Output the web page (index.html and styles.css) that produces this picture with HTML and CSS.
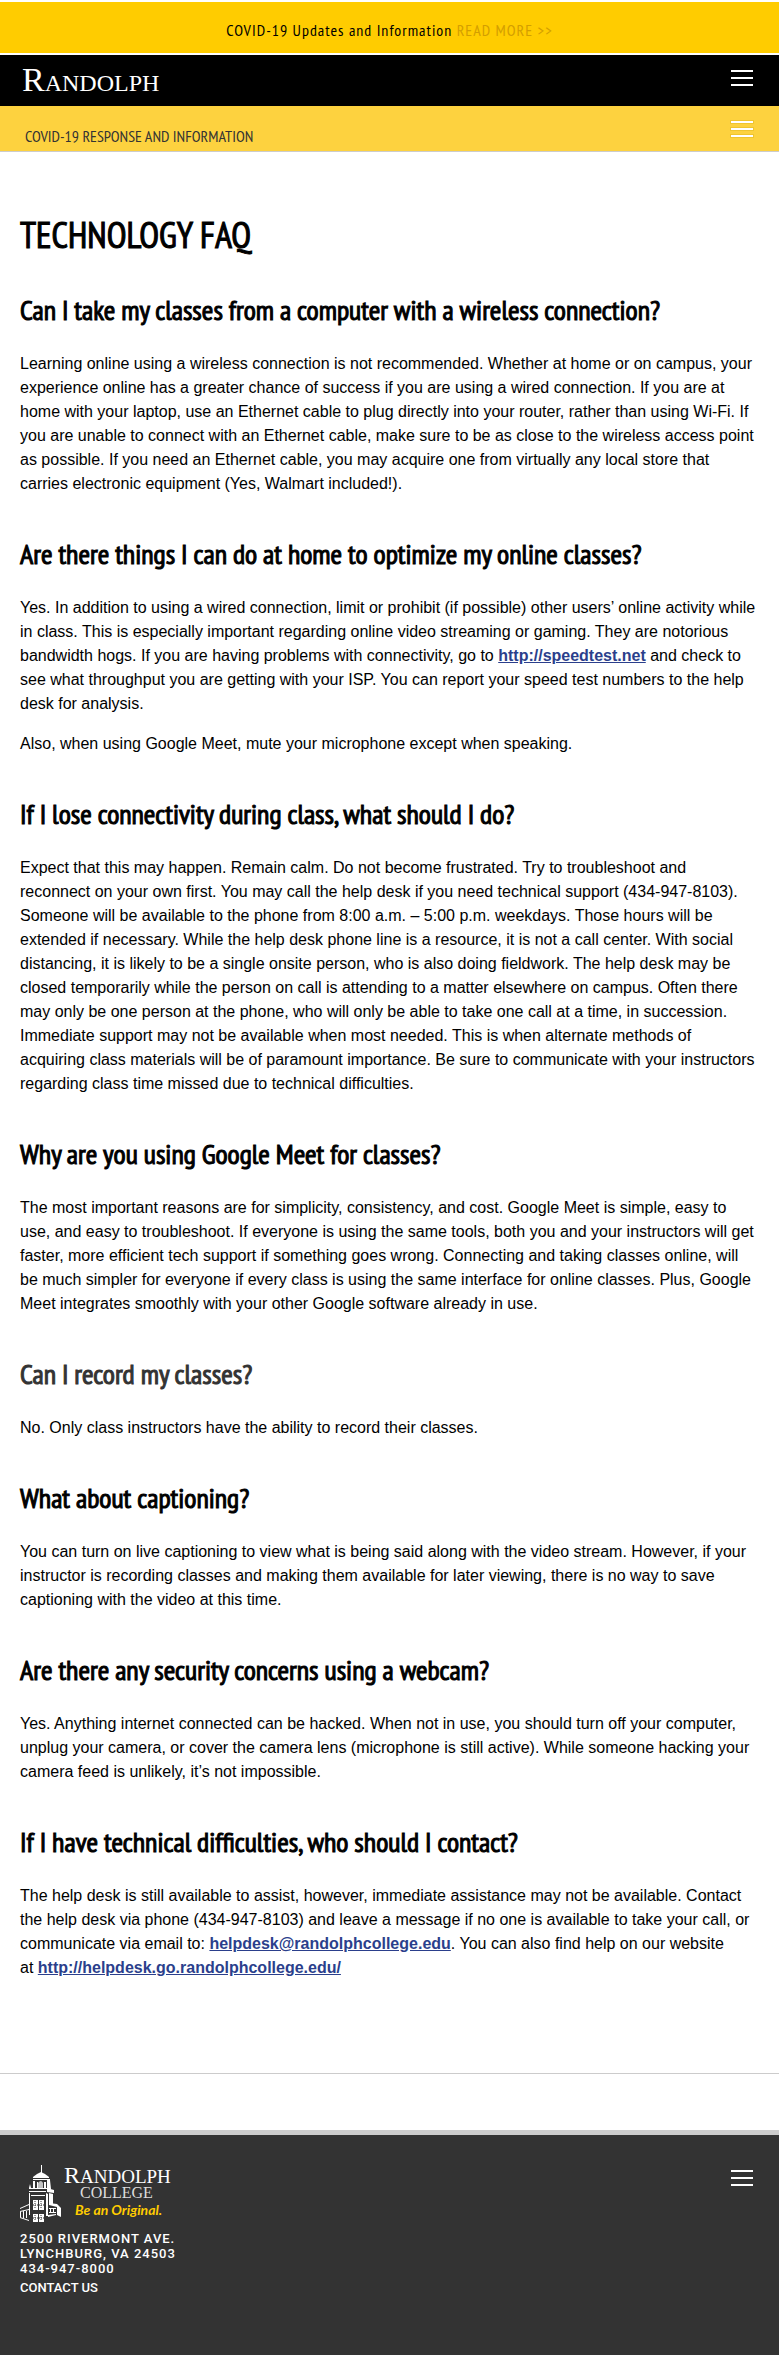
FILE: index.html
```html
<!DOCTYPE html>
<html lang="en">
<head>
<meta charset="utf-8">
<meta name="viewport" content="width=device-width, initial-scale=1">
<title>Technology FAQ - Randolph College</title>
<link rel="stylesheet" href="styles.css">
</head>
<body>
<div class="alert">COVID-19 Updates and Information <a class="alert-link" href="#">READ MORE &gt;&gt;</a></div>

<header class="masthead">
  <a class="wordmark" href="#">Randolph</a>
  <button class="menu" type="button" aria-label="Main menu"><span class="bar"></span><span class="bar"></span><span class="bar"></span></button>
</header>

<nav class="subnav">
  <a class="subnav-title" href="#">COVID-19 RESPONSE AND INFORMATION</a>
  <button class="menu menu-outlined" type="button" aria-label="Section menu"><span class="bar"></span><span class="bar"></span><span class="bar"></span></button>
</nav>

<main class="content">
  <h1 class="title">TECHNOLOGY FAQ</h1>

  <h2 class="question">Can I take my classes from a computer with a wireless connection?</h2>
  <p class="answer">Learning online using a wireless connection is not recommended. Whether at home or on campus, your experience online has a greater chance of success if you are using a wired connection. If you are at home with your laptop, use an Ethernet cable to plug directly into your router, rather than using Wi-Fi. If you are unable to connect with an Ethernet cable, make sure to be as close to the wireless access point as possible. If you need an Ethernet cable, you may acquire one from virtually any local store that carries electronic equipment (Yes, Walmart included!).</p>

  <h2 class="question">Are there things I can do at home to optimize my online classes?</h2>
  <p class="answer">Yes. In addition to using a wired connection, limit or prohibit (if possible) other users’ online activity while in class. This is especially important regarding online video streaming or gaming. They are notorious bandwidth hogs. If you are having problems with connectivity, go to <a class="link" href="#">http://speedtest.net</a> and check to see what throughput you are getting with your ISP. You can report your speed test numbers to the help desk for analysis.</p>
  <p class="answer">Also, when using Google Meet, mute your microphone except when speaking.</p>

  <h2 class="question">If I lose connectivity during class, what should I do?</h2>
  <p class="answer">Expect that this may happen. Remain calm. Do not become frustrated. Try to troubleshoot and reconnect on your own first. You may call the help desk if you need technical support (434-947-8103). Someone will be available to the phone from 8:00 a.m. – 5:00 p.m. weekdays. Those hours will be extended if necessary. While the help desk phone line is a resource, it is not a call center. With social distancing, it is likely to be a single onsite person, who is also doing fieldwork. The help desk may be closed temporarily while the person on call is attending to a matter elsewhere on campus. Often there may only be one person at the phone, who will only be able to take one call at a time, in succession. Immediate support may not be available when most needed. This is when alternate methods of acquiring class materials will be of paramount importance. Be sure to communicate with your instructors regarding class time missed due to technical difficulties.</p>

  <h2 class="question">Why are you using Google Meet for classes?</h2>
  <p class="answer">The most important reasons are for simplicity, consistency, and cost. Google Meet is simple, easy to use, and easy to troubleshoot. If everyone is using the same tools, both you and your instructors will get faster, more efficient tech support if something goes wrong. Connecting and taking classes online, will be much simpler for everyone if every class is using the same interface for online classes. Plus, Google Meet integrates smoothly with your other Google software already in use.</p>

  <h2 class="question question-soft">Can I record my classes?</h2>
  <p class="answer">No. Only class instructors have the ability to record their classes.</p>

  <h2 class="question">What about captioning?</h2>
  <p class="answer">You can turn on live captioning to view what is being said along with the video stream. However, if your instructor is recording classes and making them available for later viewing, there is no way to save captioning with the video at this time.</p>

  <h2 class="question">Are there any security concerns using a webcam?</h2>
  <p class="answer">Yes. Anything internet connected can be hacked. When not in use, you should turn off your computer, unplug your camera, or cover the camera lens (microphone is still active). While someone hacking your camera feed is unlikely, it’s not impossible.</p>

  <h2 class="question">If I have technical difficulties, who should I contact?</h2>
  <p class="answer">The help desk is still available to assist, however, immediate assistance may not be available. Contact the help desk via phone (434-947-8103) and leave a message if no one is available to take your call, or communicate via email to: <a class="link" href="#">helpdesk@randolphcollege.edu</a>. You can also find help on our website at&nbsp;<a class="link" href="#">http://helpdesk.go.randolphcollege.edu/</a></p>
</main>

<footer class="footer">
  <div class="footer-info">
    <a class="footer-logo" href="#" aria-label="Randolph College">
      <svg class="logo" width="152" height="59" viewBox="0 0 152 59" role="img" aria-label="Randolph College, Be an Original">
        <g fill="#fff">
          <path d="M21 0h1v8h-1z"/>
          <path d="M21 7l4 2 4 3v1H13v-1l4-3z"/>
          <path d="M13 14h17v1H13zM13 16h2v7h-2zM17 17h1v6h-1zM24 17h2v6h-2zM27 14l3 1 1 9h-4z"/>
          <path d="M18 18q3-4 5 0v5h-5z" opacity=".7"/>
          <path d="M9 23l1-4 1 4h16v1H9zM9 26h17v1H9zM27 23l7 2v3l-7-1z"/>
          <path d="M9 28h1v22H9zM11 30h14v1H11zM26 28l2 1v22h-2zM29 28l4 1v11l-4-1z"/>
          <path d="M13 35h5v10h-5zM19 35h5v10h-5zM13 49h5v8h-5zM19 49h5v8h-5z"/>
          <path d="M0 43l9-4v1l-9 4zM0 46l9-2v1l-9 2zM0 52l9 3v1l-9-3zM0 47h1v5H0zM3 46h1v7H3zM6 46h1v7H6z"/>
          <path d="M29 38l8 1 4 4v9l-4-2v-8l-8-2zM29 43h7v1h-7zM29 47h7v1h-7zM30 44h1v3h-1zM33 44h1v3h-1zM28 50l8-1v1l-8 2z"/>
        </g>
        <path d="M13 40h11M13 53h11M15 36v8M21 36v8M15 50v6M21 50v6" stroke="#333" stroke-width="1" stroke-dasharray="1 1" fill="none"/>
        <text class="logo-name" x="44" y="18">R<tspan class="logo-caps">ANDOLPH</tspan></text>
        <text class="logo-college" x="60" y="33">COLLEGE</text>
        <text class="logo-tagline" x="55" y="50">Be an Original.</text>
      </svg>
    </a>
    <address class="address">2500 RIVERMONT AVE.<br>LYNCHBURG, VA 24503<br>434-947-8000</address>
    <a class="contact" href="#">CONTACT US</a>
  </div>
  <button class="menu" type="button" aria-label="Footer menu"><span class="bar"></span><span class="bar"></span><span class="bar"></span></button>
</footer>
</body>
</html>
```
FILE: styles.css
```css
* {
  box-sizing: border-box;
}

body {
  margin: 0;
  background: #fff;
  color: #000;
  font: 16px/24px "Liberation Sans", Arial, sans-serif;
}

.alert,
.subnav-title,
.title,
.question {
  font-family: "PT Sans Narrow", "Liberation Sans Narrow", "Open Sans Condensed", "Roboto Condensed", "Liberation Sans", sans-serif;
}

.alert {
  margin: 2px 0;
  padding: 16px 20px 11px;
  background: #fc0;
  font-size: 16px;
  letter-spacing: 1px;
  text-align: center;
}

.alert-link {
  color: #d39e00;
  text-decoration: none;
}

.masthead,
.subnav {
  display: flex;
  justify-content: space-between;
  padding: 0 26px 0 22px;
}

.masthead {
  align-items: flex-start;
  height: 51px;
  padding-top: 5px;
  background: #000;
}

.wordmark {
  color: #fff;
  font: 34px/40px "Liberation Serif", serif;
  font-variant: small-caps;
  text-decoration: none;
}

.subnav {
  align-items: flex-end;
  height: 46px;
  padding-left: 25px;
  border-bottom: 1px solid #ccc;
  background: #fdd23f;
}

.subnav-title {
  padding-bottom: 3px;
  color: #333;
  font-size: 16px;
  text-decoration: none;
}

.menu {
  display: flex;
  flex-direction: column;
  gap: 5px;
  width: 22px;
  padding: 0;
  border: 0;
  background: none;
}

.masthead .menu {
  margin-top: 10px;
}

.bar {
  height: 2px;
  background: #fff;
}

.menu-outlined {
  align-self: flex-start;
  margin-top: 15px;
}

.menu-outlined .bar {
  box-shadow: 0 0 0 1px #efc52f;
}

.content {
  padding: 63px 20px 77px;
  border-bottom: 1px solid #ccc;
}

.title,
.question {
  margin: 0;
  font-weight: 400;
  line-height: 40px;
  -webkit-text-stroke: 1px;
}

.title {
  font-size: 36px;
}

.question {
  margin: 38px 0 22px;
  font-size: 28px;
}

.title + .question {
  margin-top: 35px;
}

.question-soft {
  color: #333;
}

.answer {
  margin: 0 0 16px;
}

.link {
  color: #2b3f8c;
  font-weight: 700;
}

.footer {
  display: flex;
  justify-content: space-between;
  align-items: flex-start;
  margin-top: 56px;
  padding: 30px 26px 60px 20px;
  border-top: 5px solid #ccc;
  background: #333;
}

.footer .menu {
  margin-top: 5px;
}

.footer-info {
  display: flex;
  flex-direction: column;
  align-items: flex-start;
  color: #fff;
  font: 500 13px/15px Roboto, sans-serif;
}

.footer-logo {
  display: flex;
  margin-bottom: 7px;
}

.logo {
  overflow: visible;
}

.logo-name {
  fill: #fff;
  font: 24px "Liberation Serif", serif;
}

.logo-caps {
  font-size: 19px;
}

.logo-college {
  fill: #ddd;
  font: 16px "Liberation Serif", serif;
}

.logo-tagline {
  fill: #fc0;
  font: italic 700 14px Lato, sans-serif;
}

.address {
  font-style: normal;
  letter-spacing: 1px;
}

.contact {
  margin-top: 4px;
  color: #fff;
  text-decoration: none;
}
```
